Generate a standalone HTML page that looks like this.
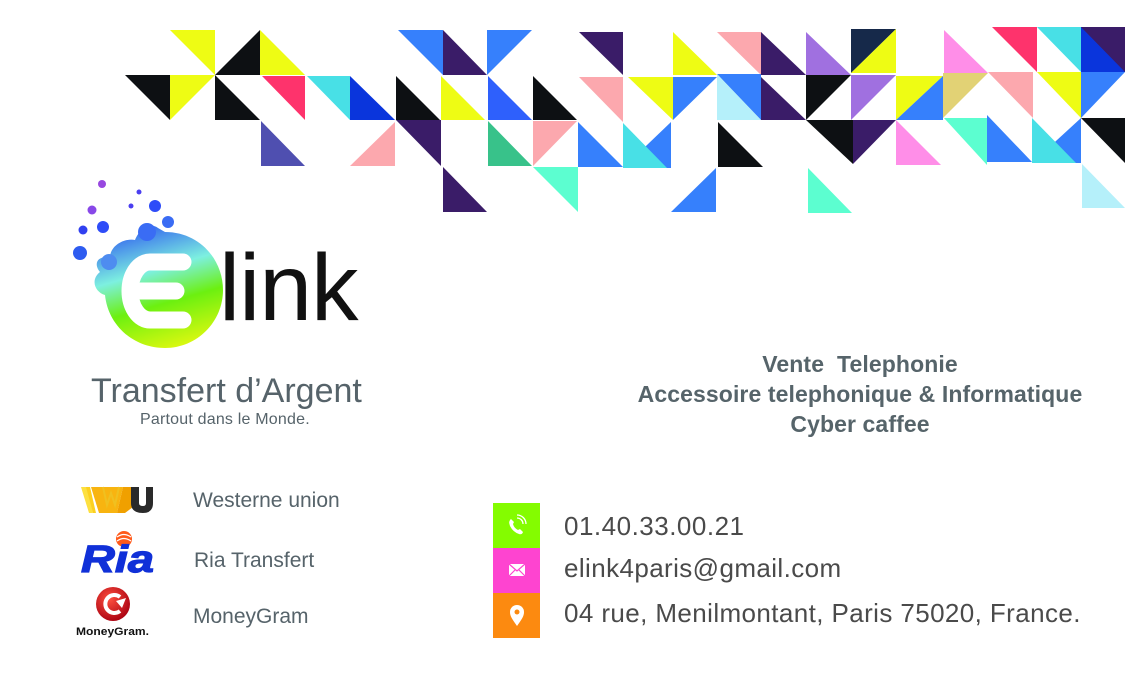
<!DOCTYPE html>
<html><head><meta charset="utf-8"><style>
body{margin:0;width:1125px;height:675px;background:#fff;position:relative;overflow:hidden;font-family:"Liberation Sans",sans-serif}
.t{position:absolute;white-space:nowrap}
</style></head><body>
<svg width="1125" height="675" style="position:absolute;left:0;top:0">
<defs>
<linearGradient id="g" x1="0.3" y1="0" x2="0.6" y2="1">
<stop offset="0" stop-color="#2f5df0"/><stop offset="0.38" stop-color="#7df0e0"/><stop offset="0.65" stop-color="#6cf010"/><stop offset="1" stop-color="#d8f810"/>
</linearGradient>
<radialGradient id="mg" cx="0.4" cy="0.35" r="0.7"><stop offset="0" stop-color="#ff5040"/><stop offset="1" stop-color="#a80010"/></radialGradient>
</defs>
<polygon fill="#eefc14" points="170,30 215,30 215,75"/>
<polygon fill="#0d1013" points="215,75 260,30 260,75"/>
<polygon fill="#eefc14" points="260,30 260,75 305,75"/>
<polygon fill="#3680fc" points="398,30 443,30 443,75"/>
<polygon fill="#3a1c68" points="443,30 443,75 487,75"/>
<polygon fill="#3680fc" points="487,30 532,30 487,75"/>
<polygon fill="#0d1013" points="125,75 170,75 170,120"/>
<polygon fill="#eefc14" points="170,75 215,75 170,120"/>
<polygon fill="#0d1013" points="215,75 215,120 260,120"/>
<polygon fill="#fe336c" points="262,76 305,76 305,120"/>
<polygon fill="#48e0e6" points="307,76 350,76 350,120"/>
<polygon fill="#0a35dc" points="350,76 350,120 395,120"/>
<polygon fill="#0d1013" points="396,76 396,120 440,120"/>
<polygon fill="#eefc14" points="441,76 441,120 485,120"/>
<polygon fill="#2e60fc" points="488,76 488,120 532,120"/>
<polygon fill="#0d1013" points="533,76 533,120 577,120"/>
<polygon fill="#4f4fb0" points="261,121 261,166 305,166"/>
<polygon fill="#fca8ae" points="350,166 395,122 395,166"/>
<polygon fill="#3a1c68" points="396,120 441,120 441,166"/>
<polygon fill="#38c28a" points="488,121 488,166 532,166"/>
<polygon fill="#fca8ae" points="533,121 577,121 533,166"/>
<polygon fill="#3a1c68" points="443,167 443,212 487,212"/>
<polygon fill="#5cfed0" points="533,167 578,167 578,212"/>
<polygon fill="#3a1c68" points="579,32 623,32 623,75"/>
<polygon fill="#eefc14" points="673,32 673,75 717,75"/>
<polygon fill="#fca8ae" points="717,32 761,32 761,75"/>
<polygon fill="#3a1c68" points="761,32 761,75 806,75"/>
<polygon fill="#a070e0" points="806,32 806,75 851,75"/>
<polygon fill="#16294a" points="851,29 896,29 851,73"/>
<polygon fill="#eefc14" points="851,73 896,29 896,73"/>
<polygon fill="#ff8ee8" points="944,30 944,73 988,73"/>
<polygon fill="#fe336c" points="992,27 1037,27 1037,72"/>
<polygon fill="#48e0e6" points="1037,27 1081,27 1081,72"/>
<polygon fill="#3a1c68" points="1081,27 1125,27 1125,72 1081,72"/>
<polygon fill="#0a35dc" points="1081,27 1081,72 1125,72"/>
<polygon fill="#fca8ae" points="579,77 623,77 623,122"/>
<polygon fill="#eefc14" points="628,77 673,77 673,120"/>
<polygon fill="#3680fc" points="673,77 717,77 673,120"/>
<polygon fill="#3680fc" points="717,74 761,74 761,120"/>
<polygon fill="#b5f0fa" points="717,74 717,120 761,120"/>
<polygon fill="#3a1c68" points="761,77 761,120 806,120"/>
<polygon fill="#0d1013" points="806,75 851,75 806,120"/>
<polygon fill="#a070e0" points="851,75 896,75 851,120"/>
<polygon fill="#eefc14" points="896,76 943,76 896,120"/>
<polygon fill="#3680fc" points="896,120 943,76 943,120"/>
<polygon fill="#e2d275" points="943,73 988,73 943,118"/>
<polygon fill="#fca8ae" points="988,72 1033,72 1033,118"/>
<polygon fill="#eefc14" points="1037,72 1081,72 1081,118"/>
<polygon fill="#3680fc" points="1081,72 1125,72 1081,118"/>
<polygon fill="#3680fc" points="578,122 578,167 623,167"/>
<polygon fill="#3680fc" points="623,168 671,122 671,168"/>
<polygon fill="#48e0e6" points="623,123 623,168 667,168"/>
<polygon fill="#0d1013" points="718,122 718,167 763,167"/>
<polygon fill="#0d1013" points="806,120 853,120 853,164"/>
<polygon fill="#3a1c68" points="853,120 896,120 853,164"/>
<polygon fill="#ff8ee8" points="896,120 896,165 941,165"/>
<polygon fill="#5cfed0" points="944,118 987,118 987,165"/>
<polygon fill="#3680fc" points="987,115 987,162 1032,162"/>
<polygon fill="#3680fc" points="1032,163 1081,118 1081,163"/>
<polygon fill="#48e0e6" points="1032,118 1032,163 1076,163"/>
<polygon fill="#0d1013" points="1081,118 1125,118 1125,163"/>
<polygon fill="#3680fc" points="671,212 716,168 716,212"/>
<polygon fill="#5cfed0" points="808,168 808,213 852,213"/>
<polygon fill="#b5f0fa" points="1082,164 1082,208 1125,208"/>
<circle cx="102" cy="184" r="4" fill="#9848e0"/>
<circle cx="139" cy="192" r="2.5" fill="#4a3ef0"/>
<circle cx="131" cy="206" r="2.5" fill="#4a3ef0"/>
<circle cx="92" cy="210" r="4.5" fill="#8848e8"/>
<circle cx="155" cy="206" r="6" fill="#2e4cf8"/>
<circle cx="83" cy="230" r="4.5" fill="#3040f0"/>
<circle cx="103" cy="227" r="6" fill="#2e4cf8"/>
<circle cx="80" cy="253" r="7" fill="#2e5cf0"/>
<path fill="url(#g)" d="M165,232 C200,232 223,260 223,290 C223,322 197,348 165,348 C133,348 108,325 105,295 C95,292 90,280 100,272 C92,262 100,255 110,258 C110,245 125,238 135,240 C140,228 150,222 158,228 Z"/>
<circle cx="147" cy="232" r="9" fill="#3a6cf4"/>
<circle cx="168" cy="222" r="6" fill="#3a6cf4"/>
<circle cx="109" cy="262" r="8" fill="#4e8cf0"/>
<path d="M183,262 H150 A20,29 0 0 0 150,320 H183 M140,291 H176" fill="none" stroke="#fff" stroke-width="17" stroke-linecap="round"/>
<g transform="translate(81,487)">
<polygon points="0,0 6,0 12,26 8,26" fill="#fde040"/>
<polygon points="5,0 9,0 15,26 12,26" fill="#fcd020"/>
<polygon points="10,0 42,0 36,26 18,26" fill="#f8b410"/>
<polygon points="42,0 54,0 52,20 44,26 36,26" fill="#f0a000"/>
<path d="M50,0 H58 V16 Q58,19 62,19 Q65,19 65,16 V0 H72 V16 Q72,26 62,26 Q50,26 50,16Z" fill="#2a2a2a"/>
<path d="M22,0 L26,18 L30,6 L34,18 L38,0" stroke="#f0c020" stroke-width="2" fill="none"/>
</g>
<circle cx="124" cy="539" r="8" fill="#ff5a1a"/>
<path d="M117,537 Q124,532 131,537 M117,541 Q124,536 131,541" stroke="#fff" stroke-width="1.2" fill="none"/>
<text x="81" y="572" font-family="Liberation Sans" font-weight="bold" font-style="italic" font-size="38" fill="#1030d8" stroke="#1030d8" stroke-width="1.2" textLength="73" lengthAdjust="spacingAndGlyphs">Ria</text>
<circle cx="113" cy="604" r="17" fill="url(#mg)"/>
<path d="M120,597 A9,9 0 1 0 120,611" stroke="#fff" stroke-width="4" fill="none"/>
<polygon points="116,601 126,598 122,608" fill="#fff"/>
<text x="76" y="635" font-family="Liberation Sans" font-weight="bold" font-size="11" fill="#111" textLength="73" lengthAdjust="spacingAndGlyphs">MoneyGram.</text>
<rect x="493" y="503" width="47" height="45" fill="#84fc00"/>
<rect x="493" y="548" width="47" height="45" fill="#fe44d0"/>
<rect x="493" y="593" width="47" height="45" fill="#fc8a10"/>
<path d="M511,519 q-3,2 -1,7 q3,6 9,8 q3,1 4,-2 l-3,-3 l-2,1 q-4,-2 -5,-6 l1,-2z" fill="#fff"/>
<path d="M517,518 a6,6 0 0 1 6,6 M517,515 a9,9 0 0 1 9,9" stroke="#fff" stroke-width="1.3" fill="none"/>
<rect x="509" y="564" width="16" height="12" fill="#fff"/>
<path d="M509,564 L517,571 L525,564 M509,576 L515,570 M525,576 L519,570" stroke="#fe44d0" stroke-width="1.2" fill="none"/>
<path d="M517,626 C512,619 510,616 510,612 A7,7 0 0 1 524,612 C524,616 522,619 517,626Z" fill="#fff"/>
<circle cx="517" cy="612" r="2.5" fill="#fc8a10"/>
</svg>
<div class="t" style="left:219px;top:238px;font-size:95px;color:#111;letter-spacing:-1px;line-height:100px">link</div>
<div class="t" style="left:91px;top:372px;font-size:34px;color:#56636a;letter-spacing:0px">Transfert d’Argent</div>
<div class="t" style="left:140px;top:411px;font-size:16px;color:#56636a;letter-spacing:0.2px">Partout dans le Monde.</div>
<div class="t" style="left:193px;top:489px;font-size:21px;color:#56636a">Westerne union</div>
<div class="t" style="left:194px;top:549px;font-size:21px;color:#56636a">Ria Transfert</div>
<div class="t" style="left:193px;top:605px;font-size:21px;color:#56636a">MoneyGram</div>
<div class="t" style="left:620px;width:480px;top:349px;text-align:center;font-size:23px;font-weight:bold;color:#56646a;line-height:30px;white-space:normal;letter-spacing:0.1px">Vente&nbsp; Telephonie<br>Accessoire telephonique &amp; Informatique<br>Cyber caffee</div>
<div class="t" style="left:564px;top:511px;font-size:26px;color:#4a4a4a;letter-spacing:0.5px">01.40.33.00.21</div>
<div class="t" style="left:564px;top:553px;font-size:26px;color:#4a4a4a;letter-spacing:0.4px">elink4paris@gmail.com</div>
<div class="t" style="left:564px;top:598px;font-size:26px;color:#4a4a4a;letter-spacing:0.4px">04 rue, Menilmontant, Paris 75020, France.</div>
</body></html>
